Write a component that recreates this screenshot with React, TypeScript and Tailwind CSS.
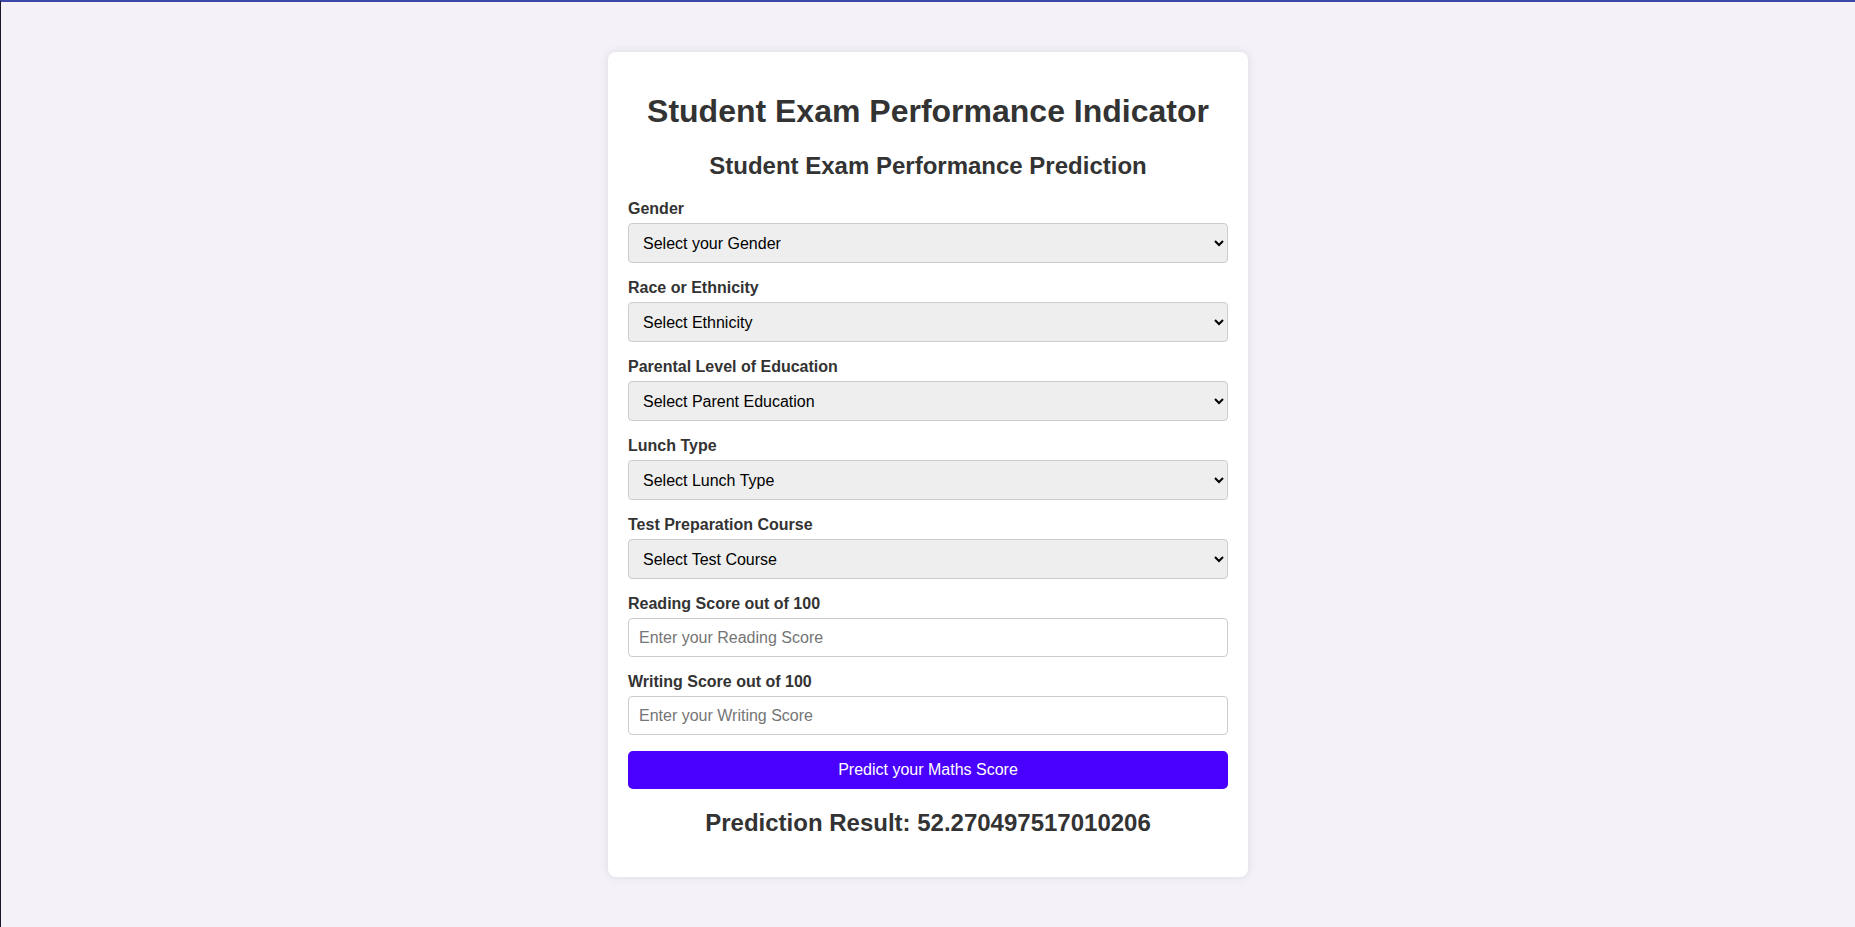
const selects = [
  {
    label: 'Gender',
    placeholder: 'Select your Gender',
    options: ['Male', 'Female'],
  },
  {
    label: 'Race or Ethnicity',
    placeholder: 'Select Ethnicity',
    options: ['Group A', 'Group B', 'Group C', 'Group D', 'Group E'],
  },
  {
    label: 'Parental Level of Education',
    placeholder: 'Select Parent Education',
    options: [
      "associate's degree",
      "bachelor's degree",
      'high school',
      "master's degree",
      'some college',
      'some high school',
    ],
  },
  {
    label: 'Lunch Type',
    placeholder: 'Select Lunch Type',
    options: ['free/reduced', 'standard'],
  },
  {
    label: 'Test Preparation Course',
    placeholder: 'Select Test Course',
    options: ['None', 'Completed'],
  },
];

const inputs = [
  { label: 'Reading Score out of 100', placeholder: 'Enter your Reading Score' },
  { label: 'Writing Score out of 100', placeholder: 'Enter your Writing Score' },
];

export default function App() {
  return (
    <div className="min-h-screen bg-[#f4f2f8] border-t-2 border-t-[#3d47a8] border-l border-l-[#1c1428] pt-[50px] font-['Liberation_Sans',Arial,sans-serif] text-[#333]">
      <div className="w-[640px] mx-auto bg-white rounded-[8px] p-[20px] shadow-[0_0_10px_rgba(0,0,0,0.1)]">
        <h1 className="text-[32px] leading-[37px] font-bold text-center my-[21px]">
          Student Exam Performance Indicator
        </h1>
        <form onSubmit={(e) => e.preventDefault()}>
          <h2 className="text-[24px] leading-[28px] font-bold text-center mt-[22px] mb-[20px]">
            Student Exam Performance Prediction
          </h2>

          {selects.map((s) => (
            <div key={s.label} className="mb-[16px]">
              <label className="block text-[16px] leading-[18px] font-bold mb-[5px]">{s.label}</label>
              <select
                defaultValue=""
                className="block w-full h-[40px] px-[10px] text-[16px] text-black bg-[#eeeeee] border border-[#cccccc] rounded-[4px]"
              >
                <option value="" disabled>
                  {s.placeholder}
                </option>
                {s.options.map((o) => (
                  <option key={o} value={o}>
                    {o}
                  </option>
                ))}
              </select>
            </div>
          ))}

          {inputs.map((i) => (
            <div key={i.label} className="mb-[16px]">
              <label className="block text-[16px] leading-[18px] font-bold mb-[5px]">{i.label}</label>
              <input
                type="number"
                placeholder={i.placeholder}
                className="block w-full h-[39px] px-[10px] text-[16px] text-black bg-white border border-[#cccccc] rounded-[4px] placeholder:text-[#757575]"
              />
            </div>
          ))}

          <button
            type="submit"
            className="block w-full h-[38px] text-[16px] text-white bg-[#4a00ff] rounded-[5px]"
          >
            Predict your Maths Score
          </button>
        </form>
        <h2 className="text-[24px] leading-[28px] font-bold text-center mt-[20px] mb-[20px]">
          Prediction Result: 52.270497517010206
        </h2>
      </div>
    </div>
  );
}
